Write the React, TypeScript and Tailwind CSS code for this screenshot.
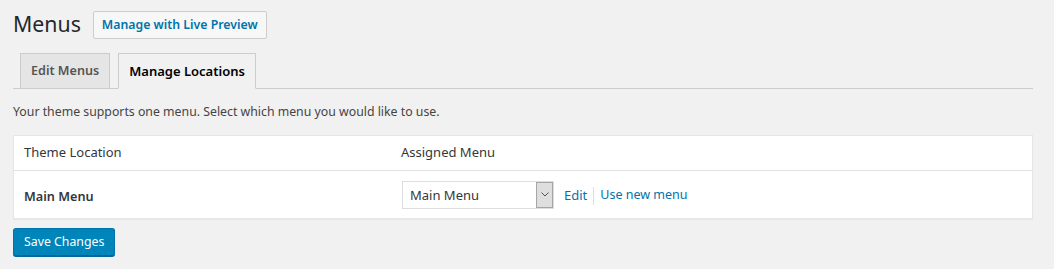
export default function App() {
  return (
    <div
      className="min-h-screen bg-[#f1f1f1] pl-[13px] pr-[21px] text-[13px] text-[#444]"
      style={{ fontFamily: '"Noto Sans", "Open Sans", sans-serif' }}
    >
      <div className="flex h-[43px] items-center pt-[9px] pb-[4px]">
        <h1 className="text-[21.3px] leading-[30px] font-normal text-[#23282d]">Menus</h1>
        <a
          href="#"
          className="ml-[12px] mt-[1px] rounded-[2px] border border-[#ccc] bg-[#f7f7f7] px-[8px] text-[12.3px] leading-[26px] font-semibold text-[#0073aa]"
        >
          Manage with Live Preview
        </a>
      </div>

      <div className="flex items-end gap-[8px] border-b border-[#ccc] pl-[7px] pt-[10px]">
        <a
          href="#"
          className="border border-b-0 border-[#ccc] bg-[#e5e5e5] px-[10px] py-[5px] text-[12.6px] leading-[24px] font-semibold text-[#555]"
        >
          Edit Menus
        </a>
        <a
          href="#"
          className="-mb-px border border-[#ccc] border-b-[#f1f1f1] bg-[#f1f1f1] px-[10px] py-[5px] text-[13px] leading-[24px] font-semibold text-black"
        >
          Manage Locations
        </a>
      </div>

      <p className="mt-[14px] text-[12.3px] leading-[18px]">
        Your theme supports one menu. Select which menu you would like to use.
      </p>

      <div className="mt-[14px] border border-[#e5e5e5] bg-white shadow-[0_1px_1px_rgba(0,0,0,0.04)]">
        <div className="flex h-[35px] items-center border-b border-[#e1e1e1] text-[#32373c]">
          <div className="w-[377px] px-[10px]">Theme Location</div>
          <div className="px-[10px]">Assigned Menu</div>
        </div>
        <div className="flex h-[47px] items-center">
          <div className="w-[377px] px-[10px] pt-[5px] text-[12.7px] font-semibold text-[#32373c]">Main Menu</div>
          <div className="flex items-center pl-[11px]">
            <div className="flex h-[28px] w-[152px] items-stretch border border-[#ddd] bg-white">
              <span className="flex-1 pl-[7px] leading-[26px] text-[#32373c]">Main Menu</span>
              <span className="flex w-[17px] items-center justify-center border border-[#a6a6a6] bg-[#dedede]">
                <svg width="8" height="5" viewBox="0 0 8 5" fill="none">
                  <path d="M0.5 0.5 L4 4 L7.5 0.5" stroke="#555" strokeWidth="1" />
                </svg>
              </span>
            </div>
            <div className="flex items-center pt-[2px]">
              <a href="#" className="ml-[10px] text-[#0073aa]">Edit</a>
              <span className="mx-[6px] h-[18px] w-px bg-[#ddd]" />
              <a href="#" className="text-[12.5px] text-[#0073aa]">Use new menu</a>
            </div>
          </div>
        </div>
      </div>

      <div className="mt-[9px]">
        <button className="h-[28px] rounded-[3px] border border-[#0073aa] border-b-[#006799] bg-[#0085ba] px-[10px] text-[12.3px] leading-[26px] text-white shadow-[0_1px_0_#006799]">
          Save Changes
        </button>
      </div>
    </div>
  );
}
